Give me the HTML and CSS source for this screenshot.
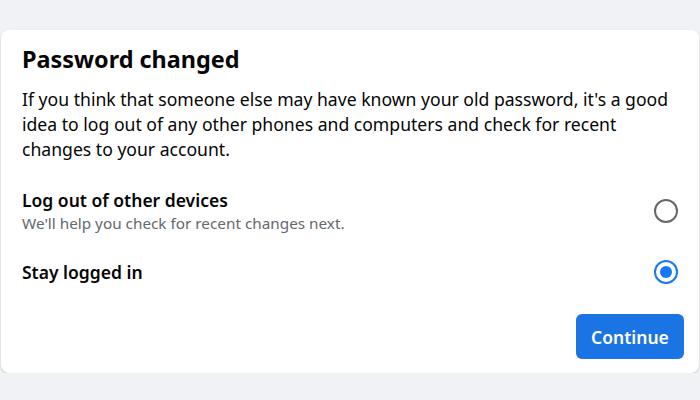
FILE: index.html
```html
<!DOCTYPE html>
<html lang="en">
<head>
    <meta charset="UTF-8">
    <meta name="viewport" content="width=device-width, initial-scale=1.0">
    <title>Password changed</title>
    <link rel="stylesheet" href="styles.css">
</head>
<body>
    <div class="card">
        <h1 class="title">Password changed</h1>
        <p class="intro">If you think that someone else may have known your old password, it's a good idea to log out of any other phones and computers and check for recent changes to your account.</p>

        <!-- Options -->
        <label class="option">
            <div class="option-text">
                <div class="option-title">Log out of other devices</div>
                <div class="option-sub">We'll help you check for recent changes next.</div>
            </div>
            <span class="radio"></span>
        </label>

        <label class="option">
            <div class="option-text">
                <div class="option-title">Stay logged in</div>
            </div>
            <span class="radio checked"></span>
        </label>

        <div class="actions">
            <button class="button">Continue</button>
        </div>
    </div>
</body>
</html>
```

FILE: styles.css
```css
body {
    font-family: "Noto Sans", "Open Sans", sans-serif;
    margin: 0;
    padding: 30px 1px 0 1px;
    background-color: #f0f2f5;
    color: #050505;
}

.card {
    background-color: #fff;
    border-radius: 8px;
    box-shadow: 0 1px 2px rgba(0, 0, 0, 0.2);
    padding: 13px 15px 16px 21px;
    height: 314px;
}

.title {
    margin: 0;
    font-size: 23.4px;
    font-weight: bold;
    line-height: 32px;
}

.intro {
    margin: 12px 0 0 0;
    font-size: 17.6px;
    line-height: 25px;
}

.option {
    display: flex;
    align-items: center;
    justify-content: space-between;
    margin-top: 26px;
}

.option + .option {
    margin-top: 26px;
}

.option-title {
    font-size: 17.5px;
    font-weight: 600;
    line-height: 24px;
}

.option-sub {
    font-size: 15.3px;
    line-height: 22px;
    color: #65676b;
}

.radio {
    width: 20px;
    height: 20px;
    border: 2px solid #65676b;
    border-radius: 50%;
    margin-right: 6px;
    box-sizing: content-box;
    position: relative;
}

.radio.checked {
    border-color: #1877f2;
}

.radio.checked::after {
    content: '';
    position: absolute;
    top: 4px;
    left: 4px;
    width: 12px;
    height: 12px;
    border-radius: 50%;
    background-color: #1877f2;
}

.actions {
    display: flex;
    justify-content: flex-end;
    margin-top: 30px;
}

.button {
    width: 108px;
    height: 45px;
    border: none;
    border-radius: 6px;
    background-color: #1b74e4;
    color: #fff;
    font-family: inherit;
    font-size: 17.5px;
    font-weight: 600;
    cursor: pointer;
}
```
